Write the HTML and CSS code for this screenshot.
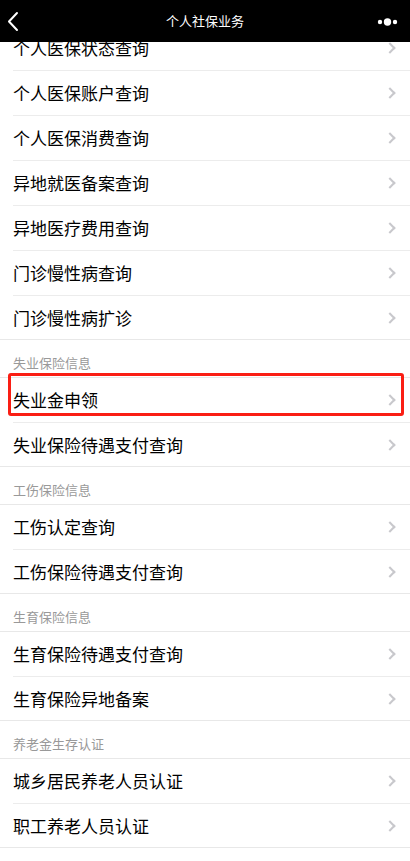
FILE: index.html
```html
<!DOCTYPE html>
<html lang="zh-CN">
<head>
<meta charset="utf-8">
<title>个人社保业务</title>
<link rel="stylesheet" href="styles.css">
</head>
<body>
<header class="nav">
  <svg class="nav-back" width="20" height="42" viewBox="0 0 20 42"><polyline points="17,13 9,21.5 17,30" fill="none" stroke="#fff" stroke-width="2" stroke-linecap="round" stroke-linejoin="round"/></svg>
  <div class="nav-title">个人社保业务</div>
  <svg class="nav-more" width="24" height="42" viewBox="0 0 24 42"><circle cx="3" cy="22" r="2.2" fill="#fff"/><circle cx="10.5" cy="22" r="3.7" fill="#fff"/><circle cx="18" cy="22" r="2.2" fill="#fff"/></svg>
</header>
<main class="page">
  <div class="group">
    <div class="cell"><div class="cell-body"><span class="cell-text">个人医保状态查询</span><span class="arrow"></span></div></div>
    <div class="cell"><div class="cell-body"><span class="cell-text">个人医保账户查询</span><span class="arrow"></span></div></div>
    <div class="cell"><div class="cell-body"><span class="cell-text">个人医保消费查询</span><span class="arrow"></span></div></div>
    <div class="cell"><div class="cell-body"><span class="cell-text">异地就医备案查询</span><span class="arrow"></span></div></div>
    <div class="cell"><div class="cell-body"><span class="cell-text">异地医疗费用查询</span><span class="arrow"></span></div></div>
    <div class="cell"><div class="cell-body"><span class="cell-text">门诊慢性病查询</span><span class="arrow"></span></div></div>
    <div class="cell"><div class="cell-body"><span class="cell-text">门诊慢性病扩诊</span><span class="arrow"></span></div></div>
  </div>
  <div class="section-title">失业保险信息</div>
  <div class="group">
    <div class="cell cell-marked"><div class="cell-body"><span class="cell-text">失业金申领</span><span class="arrow"></span></div><div class="mark"></div></div>
    <div class="cell"><div class="cell-body"><span class="cell-text">失业保险待遇支付查询</span><span class="arrow"></span></div></div>
  </div>
  <div class="section-title">工伤保险信息</div>
  <div class="group">
    <div class="cell"><div class="cell-body"><span class="cell-text">工伤认定查询</span><span class="arrow"></span></div></div>
    <div class="cell"><div class="cell-body"><span class="cell-text">工伤保险待遇支付查询</span><span class="arrow"></span></div></div>
  </div>
  <div class="section-title">生育保险信息</div>
  <div class="group">
    <div class="cell"><div class="cell-body"><span class="cell-text">生育保险待遇支付查询</span><span class="arrow"></span></div></div>
    <div class="cell"><div class="cell-body"><span class="cell-text">生育保险异地备案</span><span class="arrow"></span></div></div>
  </div>
  <div class="section-title">养老金生存认证</div>
  <div class="group">
    <div class="cell"><div class="cell-body"><span class="cell-text">城乡居民养老人员认证</span><span class="arrow"></span></div></div>
    <div class="cell"><div class="cell-body"><span class="cell-text">职工养老人员认证</span><span class="arrow"></span></div></div>
  </div>
</main>
</body>
</html>
```

FILE: styles.css
```css
* { box-sizing: border-box; }
html, body {
  margin: 0;
  padding: 0;
  background: #fff;
  font-family: "Noto Sans CJK SC", "Noto Sans", "Liberation Sans", sans-serif;
}
.nav {
  position: fixed;
  top: 0;
  left: 0;
  right: 0;
  height: 42px;
  background: #000;
  display: flex;
  align-items: center;
  justify-content: space-between;
  padding: 0 9px 0 0;
  z-index: 10;
}
.nav-back { display: block; }
.nav-title {
  color: #fff;
  font-size: 13px;
  line-height: 42px;
  position: absolute;
  left: 0;
  right: 0;
  text-align: center;
  pointer-events: none;
}
.nav-more { display: block; }
.page {
  padding-top: 25px;
}
.group {
  border-top: 1px solid #e8e8e8;
  border-bottom: 1px solid #e8e8e8;
  background: #fff;
}
.cell {
  padding-left: 13px;
  position: relative;
}
.cell-body {
  height: 45px;
  display: flex;
  align-items: center;
  justify-content: space-between;
  padding-right: 13px;
  border-top: 1px solid #ececec;
}
.cell:last-child .cell-body {
  height: 44px;
}
.cell:first-child .cell-body {
  height: 44px;
  border-top: none;
}
.cell-text {
  font-size: 17px;
  color: #000;
  line-height: 24px;
}
.arrow {
  width: 8px;
  height: 8px;
  border-top: 2px solid #c8c8cc;
  border-right: 2px solid #c8c8cc;
  transform: rotate(45deg);
  margin-right: 3px;
}
.section-title {
  font-size: 13px;
  line-height: 17px;
  color: #999;
  padding: 14px 13px 6px;
  height: 37px;
}
.mark {
  position: absolute;
  left: 8px;
  right: 6px;
  top: -5px;
  height: 43px;
  border: 3px solid #fa1e14;
  border-radius: 3px;
  pointer-events: none;
}
```
